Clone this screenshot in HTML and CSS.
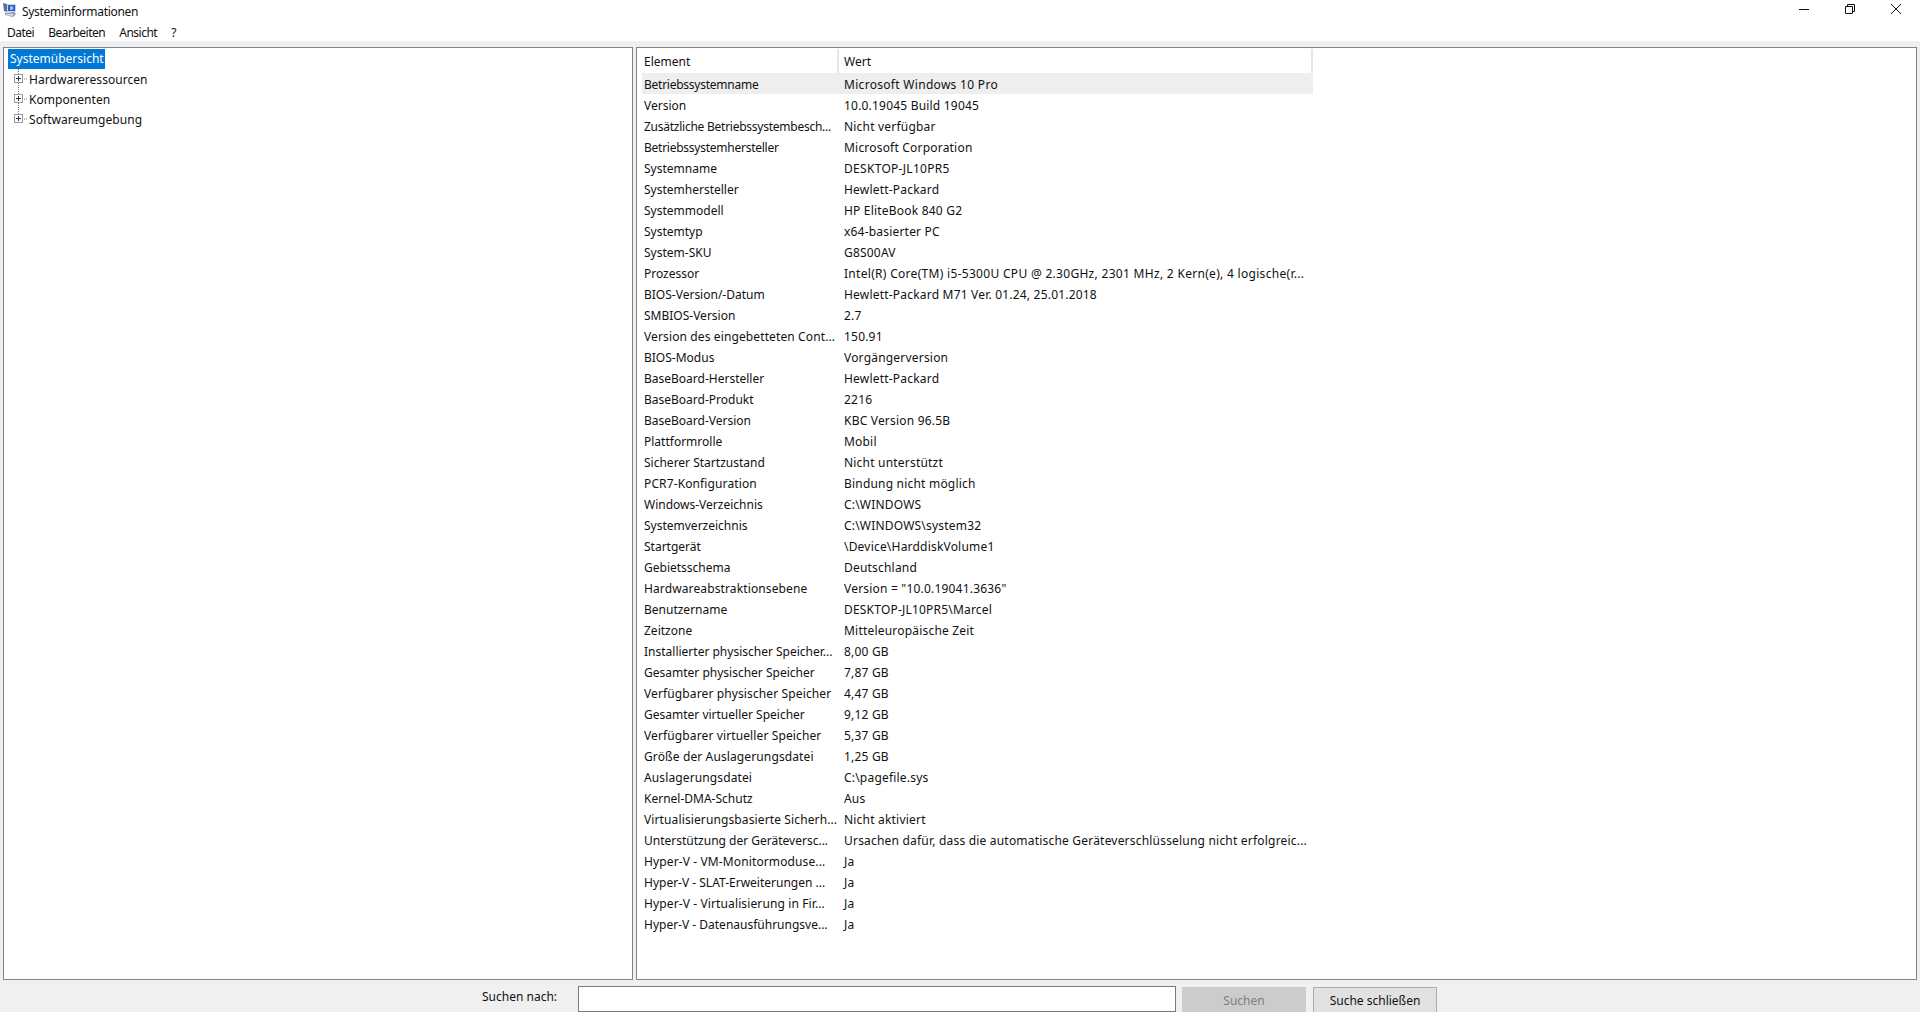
FILE: index.html
```html
<!DOCTYPE html>
<html lang="de">
<head>
<meta charset="utf-8">
<title>Systeminformationen</title>
<link rel="stylesheet" href="styles.css">
</head>
<body>
<div class="app">
  <header class="titlebar">
    <svg class="appicon" width="16" height="16" viewBox="0 0 16 16">
      <path d="M1 1l4 1v8l-3-1z" fill="#5a6f9e"/>
      <path d="M5 2h9v8H5z" fill="#c9d4e4"/>
      <path d="M6 3h7v6H6z" fill="#2a5fbf"/>
      <path d="M8 4.5a2 2 0 1 1 0 3z" fill="#8fc4ee"/>
      <path d="M3 11l9-1 2 2-3 3-8-2z" fill="#8a8fa8"/>
      <path d="M4 12l7-.6 1 1-2 1.5-6-1z" fill="#d8dbe6"/>
    </svg>
    <span class="title">Systeminformationen</span>
    <div class="winctrls">
      <svg width="46" height="20" viewBox="0 0 46 20"><path d="M18 10.5h10" stroke="#111" fill="none"/></svg>
      <svg width="46" height="20" viewBox="0 0 46 20"><path d="M18.5 7.5h7v7h-7zM20.5 7.5v-2h7v7h-2" stroke="#111" fill="none"/></svg>
      <svg width="46" height="20" viewBox="0 0 46 20"><path d="M18 5l10 10M28 5l-10 10" stroke="#111" fill="none"/></svg>
    </div>
  </header>
  <nav class="menubar">
    <span>Datei</span><span>Bearbeiten</span><span>Ansicht</span><span>?</span>
  </nav>
  <main class="panes">
    <section class="pane tree">
      <div class="tree-root"><span class="selected">Systemübersicht</span></div>
      <div class="tree-item"><svg class="exp" width="20" height="20" viewBox="0 0 20 20"><path d="M4.5 0v5.5M4.5 14v6M10 10h3" stroke="#777" stroke-dasharray="1 1" fill="none"/><rect x="0.5" y="6.5" width="8" height="8" fill="#fff" stroke="#9a9aa6" transform="translate(0 -1)"/><path d="M2 9.5h5M4.5 7v5" stroke="#333" fill="none"/></svg><span>Hardwareressourcen</span></div>
      <div class="tree-item"><svg class="exp" width="20" height="20" viewBox="0 0 20 20"><path d="M4.5 0v5.5M4.5 14v6M10 10h3" stroke="#777" stroke-dasharray="1 1" fill="none"/><rect x="0.5" y="6.5" width="8" height="8" fill="#fff" stroke="#9a9aa6" transform="translate(0 -1)"/><path d="M2 9.5h5M4.5 7v5" stroke="#333" fill="none"/></svg><span>Komponenten</span></div>
      <div class="tree-item"><svg class="exp" width="20" height="20" viewBox="0 0 20 20"><path d="M4.5 0v5.5M10 10h3" stroke="#777" stroke-dasharray="1 1" fill="none"/><rect x="0.5" y="6.5" width="8" height="8" fill="#fff" stroke="#9a9aa6" transform="translate(0 -1)"/><path d="M2 9.5h5M4.5 7v5" stroke="#333" fill="none"/></svg><span>Softwareumgebung</span></div>
    </section>
    <section class="pane list">
      <div class="head"><span class="c1">Element</span><span class="c2">Wert</span></div>
      <div class="row sel"><span class="c1 tight">Betriebssystemname</span><span class="c2 wide">Microsoft Windows 10 Pro</span></div>
      <div class="row"><span class="c1">Version</span><span class="c2">10.0.19045 Build 19045</span></div>
      <div class="row"><span class="c1 tight">Zusätzliche Betriebssystembesch...</span><span class="c2">Nicht verfügbar</span></div>
      <div class="row"><span class="c1 tight">Betriebssystemhersteller</span><span class="c2">Microsoft Corporation</span></div>
      <div class="row"><span class="c1">Systemname</span><span class="c2 wide">DESKTOP-JL10PR5</span></div>
      <div class="row"><span class="c1">Systemhersteller</span><span class="c2">Hewlett-Packard</span></div>
      <div class="row"><span class="c1">Systemmodell</span><span class="c2">HP EliteBook 840 G2</span></div>
      <div class="row"><span class="c1">Systemtyp</span><span class="c2">x64-basierter PC</span></div>
      <div class="row"><span class="c1">System-SKU</span><span class="c2">G8S00AV</span></div>
      <div class="row"><span class="c1">Prozessor</span><span class="c2 wide">Intel(R) Core(TM) i5-5300U CPU @ 2.30GHz, 2301 MHz, 2 Kern(e), 4 logische(r...</span></div>
      <div class="row"><span class="c1">BIOS-Version/-Datum</span><span class="c2">Hewlett-Packard M71 Ver. 01.24, 25.01.2018</span></div>
      <div class="row"><span class="c1">SMBIOS-Version</span><span class="c2">2.7</span></div>
      <div class="row"><span class="c1 loose">Version des eingebetteten Cont...</span><span class="c2">150.91</span></div>
      <div class="row"><span class="c1">BIOS-Modus</span><span class="c2">Vorgängerversion</span></div>
      <div class="row"><span class="c1">BaseBoard-Hersteller</span><span class="c2">Hewlett-Packard</span></div>
      <div class="row"><span class="c1">BaseBoard-Produkt</span><span class="c2">2216</span></div>
      <div class="row"><span class="c1">BaseBoard-Version</span><span class="c2">KBC Version 96.5B</span></div>
      <div class="row"><span class="c1">Plattformrolle</span><span class="c2">Mobil</span></div>
      <div class="row"><span class="c1">Sicherer Startzustand</span><span class="c2">Nicht unterstützt</span></div>
      <div class="row"><span class="c1 loose">PCR7-Konfiguration</span><span class="c2">Bindung nicht möglich</span></div>
      <div class="row"><span class="c1">Windows-Verzeichnis</span><span class="c2">C:\WINDOWS</span></div>
      <div class="row"><span class="c1">Systemverzeichnis</span><span class="c2">C:\WINDOWS\system32</span></div>
      <div class="row"><span class="c1">Startgerät</span><span class="c2">\Device\HarddiskVolume1</span></div>
      <div class="row"><span class="c1">Gebietsschema</span><span class="c2">Deutschland</span></div>
      <div class="row"><span class="c1 loose">Hardwareabstraktionsebene</span><span class="c2">Version = "10.0.19041.3636"</span></div>
      <div class="row"><span class="c1">Benutzername</span><span class="c2">DESKTOP-JL10PR5\Marcel</span></div>
      <div class="row"><span class="c1">Zeitzone</span><span class="c2">Mitteleuropäische Zeit</span></div>
      <div class="row"><span class="c1">Installierter physischer Speicher...</span><span class="c2">8,00 GB</span></div>
      <div class="row"><span class="c1">Gesamter physischer Speicher</span><span class="c2">7,87 GB</span></div>
      <div class="row"><span class="c1 loose">Verfügbarer physischer Speicher</span><span class="c2">4,47 GB</span></div>
      <div class="row"><span class="c1">Gesamter virtueller Speicher</span><span class="c2">9,12 GB</span></div>
      <div class="row"><span class="c1 loose">Verfügbarer virtueller Speicher</span><span class="c2">5,37 GB</span></div>
      <div class="row"><span class="c1 loose">Größe der Auslagerungsdatei</span><span class="c2">1,25 GB</span></div>
      <div class="row"><span class="c1 loose">Auslagerungsdatei</span><span class="c2">C:\pagefile.sys</span></div>
      <div class="row"><span class="c1">Kernel-DMA-Schutz</span><span class="c2">Aus</span></div>
      <div class="row"><span class="c1 loose">Virtualisierungsbasierte Sicherh...</span><span class="c2">Nicht aktiviert</span></div>
      <div class="row"><span class="c1">Unterstützung der Geräteversc...</span><span class="c2">Ursachen dafür, dass die automatische Geräteverschlüsselung nicht erfolgreic...</span></div>
      <div class="row"><span class="c1 loose">Hyper-V - VM-Monitormoduse...</span><span class="c2">Ja</span></div>
      <div class="row"><span class="c1">Hyper-V - SLAT-Erweiterungen ...</span><span class="c2">Ja</span></div>
      <div class="row"><span class="c1 loose">Hyper-V - Virtualisierung in Fir...</span><span class="c2">Ja</span></div>
      <div class="row"><span class="c1">Hyper-V - Datenausführungsve...</span><span class="c2">Ja</span></div>
    </section>
  </main>
  <footer class="search">
    <label class="search-label">Suchen nach:</label>
    <div class="search-input"></div>
    <div class="btn disabled">Suchen</div>
    <div class="btn">Suche schließen</div>
  </footer>
</div>
</body>
</html>
```
FILE: styles.css
```css
* { box-sizing: border-box; }
html, body { margin: 0; height: 100%; overflow: hidden; }
body { font: 12px/16px "Noto Sans", sans-serif; color: #111; background: #f0f0f0; }
.app { height: 1012px; display: flex; flex-direction: column; overflow: hidden; }
.titlebar { height: 22px; background: #fff; display: flex; align-items: center; padding-left: 2px; }
.appicon { margin-right: 4px; margin-top: -3px; }
.title { margin-top: 1px; letter-spacing: -0.3px; }
.winctrls { margin-left: auto; display: flex; margin-top: -4px; margin-right: 1px; }
.menubar { height: 19px; background: #fff; display: flex; padding-left: 7px; gap: 14px; align-items: flex-start; padding-top: 3px; letter-spacing: -0.5px; }
.panes { height: 933px; margin-top: 6px; padding: 0 3px; display: flex; gap: 3px; flex: none; }
.pane { background: #fff; border: 1px solid #82828c; }
.tree { width: 630px; padding: 1px 0 0 4px; }
.tree-root { height: 20px; }
.selected { display: inline-block; background: #0078d7; color: #fff; height: 20px; line-height: 20px; padding: 0 1px 0 2px; }
.tree-item { height: 20px; display: flex; align-items: center; padding-left: 6px; letter-spacing: 0.05px; }
.tree-item span { position: relative; top: 1px; }
.exp { flex: none; margin-right: -5px; }
.list { flex: 1; padding: 1px 0 0 5px; }
.head, .row { display: flex; width: 671px; }
.head { height: 24px; }
.head .c1 { width: 195px; line-height: 26px; }
.head .c2 { flex: 1; border-left: 2px solid #e6e6e6; border-right: 2px solid #e6e6e6; padding-left: 5px; line-height: 26px; letter-spacing: 0; }
.row { height: 21px; line-height: 23px; }
.sel { background: #eeeeee; }
.c1 { width: 202px; padding-left: 2px; white-space: nowrap; flex: none; }
.tight { letter-spacing: -0.25px; }
.loose { letter-spacing: 0.12px; }
.c2 { white-space: nowrap; letter-spacing: 0.2px; }
.wide { letter-spacing: 0.3px; }
.search { height: 32px; flex: none; display: flex; align-items: flex-start; padding-left: 482px; }
.search-label { margin-top: 9px; width: 96px; }
.search-input { width: 598px; height: 26px; margin-top: 6px; background: #fff; border: 1px solid #7a7a7a; }
.btn { width: 124px; height: 30px; margin: 7px 0 0 6px; background: #e1e1e1; border: 1px solid #adadad; text-align: center; line-height: 26px; }
.btn:last-child { margin-left: 7px; }
.btn.disabled { background: #cccccc; border-color: #cccccc; color: #7f7f7f; }
```
